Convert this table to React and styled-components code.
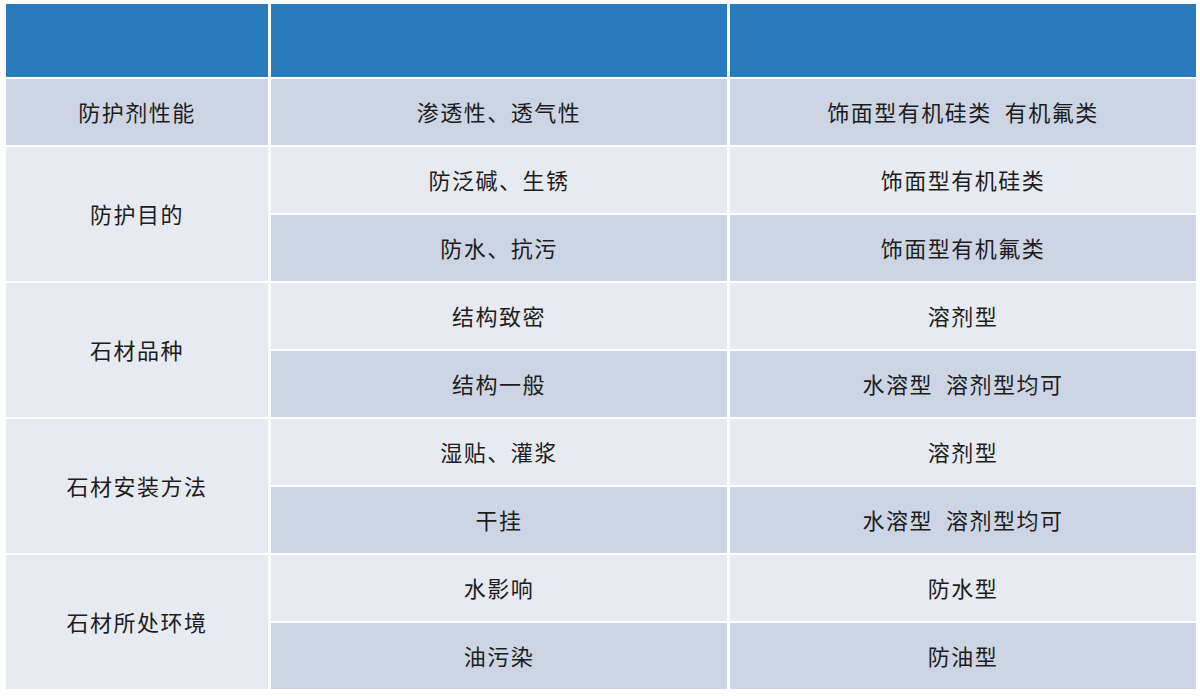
import React from "react";
import styled, { createGlobalStyle } from "styled-components";

const GlobalStyle = createGlobalStyle`
  html, body {
    margin: 0;
    padding: 0;
    background: #ffffff;
  }
  body {
    font-family: "Noto Sans CJK SC", "Noto Sans", sans-serif;
  }
`;

const Page = styled.div`
  width: 1200px;
  height: 696px;
  padding: 4px 0 0 6px;
  box-sizing: border-box;
  overflow: hidden;
`;

const Table = styled.div`
  display: grid;
  grid-template-columns: 262px 456px 466px;
  grid-template-rows: 73px repeat(9, 66px);
  column-gap: 3px;
  row-gap: 2px;
`;

const HeadCell = styled.div`
  background: #2a7bbb;
`;

const Cell = styled.div`
  display: flex;
  align-items: center;
  justify-content: center;
  padding-bottom: 2px;
  background: ${(p) => (p.$dark ? "#cdd5e4" : "#e8eaf2")};
  color: #1c1c1c;
  font-size: 22px;
  letter-spacing: 1.5px;
  white-space: pre;
  grid-row: ${(p) => (p.$span ? `span ${p.$span}` : "auto")};
`;

const groups = [
  { label: "防护剂性能", rows: [["渗透性、透气性", "饰面型有机硅类  有机氟类"]] },
  {
    label: "防护目的",
    rows: [
      ["防泛碱、生锈", "饰面型有机硅类"],
      ["防水、抗污", "饰面型有机氟类"],
    ],
  },
  {
    label: "石材品种",
    rows: [
      ["结构致密", "溶剂型"],
      ["结构一般", "水溶型  溶剂型均可"],
    ],
  },
  {
    label: "石材安装方法",
    rows: [
      ["湿贴、灌浆", "溶剂型"],
      ["干挂", "水溶型  溶剂型均可"],
    ],
  },
  {
    label: "石材所处环境",
    rows: [
      ["水影响", "防水型"],
      ["油污染", "防油型"],
    ],
  },
];

export default function App() {
  let rowIndex = 0;
  return (
    <Page>
      <GlobalStyle />
      <Table>
        <HeadCell />
        <HeadCell />
        <HeadCell />
        {groups.map((group) => {
          const cells = [];
          const single = group.rows.length === 1;
          group.rows.forEach((row, i) => {
            const dark = rowIndex % 2 === 0;
            rowIndex++;
            if (i === 0) {
              cells.push(
                <Cell
                  key={group.label}
                  $dark={single ? dark : false}
                  $span={group.rows.length}
                >
                  {group.label}
                </Cell>
              );
            }
            cells.push(
              <Cell key={group.label + i + "a"} $dark={dark}>
                {row[0]}
              </Cell>,
              <Cell key={group.label + i + "b"} $dark={dark}>
                {row[1]}
              </Cell>
            );
          });
          return cells;
        })}
      </Table>
    </Page>
  );
}
